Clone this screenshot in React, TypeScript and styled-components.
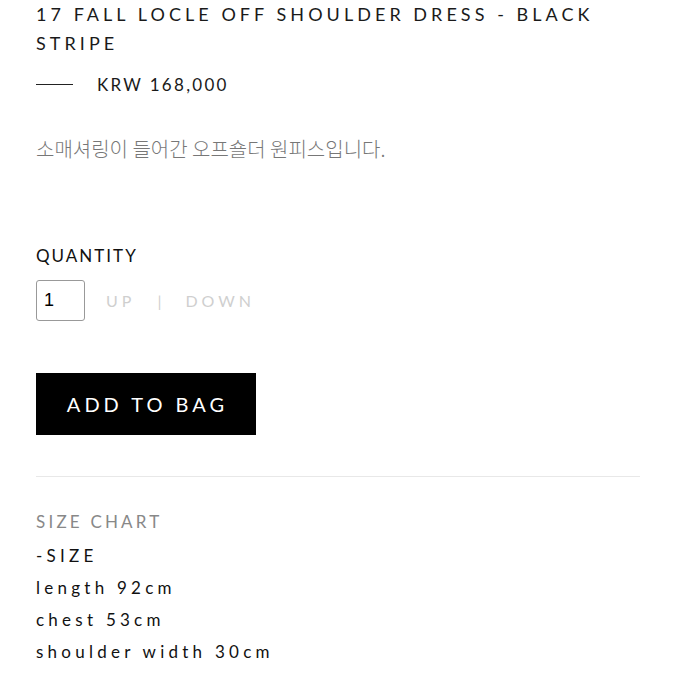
import React from "react";
import styled, { createGlobalStyle } from "styled-components";

const Global = createGlobalStyle`
  html, body { margin: 0; padding: 0; background: #fff; }
  body { font-family: "Lato", "Open Sans", sans-serif; color: #111; }
`;

const Page = styled.div`
  padding: 0 33px 0 36px;
  display: flex;
  flex-direction: column;
`;

const Title = styled.h1`
  margin: 0;
  font-size: 18px;
  font-weight: 400;
  line-height: 29px;
  letter-spacing: 4.05px;
  color: #1a1a1a;
  width: 600px;
`;

const PriceRow = styled.div`
  display: flex;
  align-items: center;
  gap: 24px;
  margin-top: 13px;
  height: 26px;
`;

const Dash = styled.span`
  display: block;
  width: 37px;
  height: 1px;
  background: #222;
`;

const Price = styled.span`
  font-size: 17px;
  letter-spacing: 2.3px;
  color: #1a1a1a;
`;

const Desc = styled.p`
  margin: 38px 0 0;
  font-family: "Noto Sans CJK KR", sans-serif;
  font-size: 20px;
  font-weight: 300;
  color: #777;
  line-height: 28px;
`;

const Label = styled.div`
  margin-top: 81px;
  font-size: 17px;
  letter-spacing: 2px;
  color: #111;
  line-height: 24px;
`;

const QtyRow = styled.div`
  display: flex;
  align-items: center;
  margin-top: 12px;
`;

const QtyBox = styled.div`
  border: 1px solid #999;
  border-radius: 3px;
  display: flex;
  align-items: center;
  padding-left: 7px;
  box-sizing: border-box;
  width: 49px;
  height: 41px;
  font-family: "Liberation Sans", sans-serif;
  font-size: 18px;
  color: #000;
`;

const QtyLink = styled.span<{ $ml: number }>`
  margin-left: ${(p) => p.$ml}px;
  font-size: 16px;
  font-weight: 400;
  letter-spacing: 4px;
  color: #cfcfcf;
`;

const Button = styled.button`
  margin-top: 52px;
  width: 220px;
  height: 62px;
  background: #000;
  color: #fff;
  border: none;
  font-family: "Lato", sans-serif;
  font-size: 20px;
  font-weight: 400;
  letter-spacing: 4px;
  padding: 0 0 0 3px;
  align-self: flex-start;
`;

const Divider = styled.hr`
  margin: 41px 0 0;
  border: none;
  border-top: 1px solid #e8e8e8;
  width: 604px;
`;

const ChartTitle = styled.div`
  margin-top: 33px;
  font-size: 17px;
  letter-spacing: 3.2px;
  color: #888;
  line-height: 24px;
`;

const ChartLine = styled.div`
  font-size: 17px;
  letter-spacing: 4.25px;
  color: #111;
  line-height: 32px;
`;

export default function App() {
  return (
    <>
      <Global />
      <Page>
        <Title>17 FALL LOCLE OFF SHOULDER DRESS - BLACK STRIPE</Title>
        <PriceRow>
          <Dash />
          <Price>KRW 168,000</Price>
        </PriceRow>
        <Desc>소매셔링이 들어간 오프숄더 원피스입니다.</Desc>
        <Label>QUANTITY</Label>
        <QtyRow>
          <QtyBox>1</QtyBox>
          <QtyLink $ml={21}>UP</QtyLink>
          <QtyLink $ml={22}>|</QtyLink>
          <QtyLink $ml={20}>DOWN</QtyLink>
        </QtyRow>
        <Button>ADD TO BAG</Button>
        <Divider />
        <ChartTitle>SIZE CHART</ChartTitle>
        <ChartLine style={{ marginTop: 6 }}>-SIZE</ChartLine>
        <ChartLine>length 92cm</ChartLine>
        <ChartLine>chest 53cm</ChartLine>
        <ChartLine>shoulder width 30cm</ChartLine>
      </Page>
    </>
  );
}
